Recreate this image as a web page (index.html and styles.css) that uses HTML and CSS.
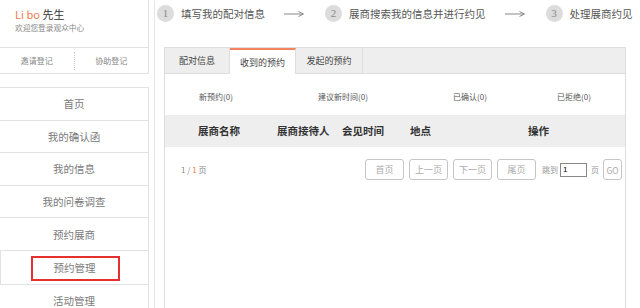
FILE: index.html
```html
<!DOCTYPE html>
<html lang="zh-CN">
<head>
<meta charset="utf-8">
<title>观众中心 - 预约管理</title>
<link rel="stylesheet" href="styles.css">
</head>
<body>
<div class="page">
  <aside class="sidebar">
    <div class="profile">
      <div class="name"><span class="accent">Li bo</span> 先生</div>
      <div class="welcome">欢迎您登录观众中心</div>
    </div>
    <div class="quick">
      <a class="quick-link">邀请登记</a>
      <span class="quick-sep"></span>
      <a class="quick-link">协助登记</a>
    </div>
    <nav class="nav">
      <a class="nav-item">首页</a>
      <a class="nav-item">我的确认函</a>
      <a class="nav-item">我的信息</a>
      <a class="nav-item">我的问卷调查</a>
      <a class="nav-item">预约展商</a>
      <a class="nav-item nav-item-active">预约管理<span class="highlight"></span></a>
      <a class="nav-item">活动管理</a>
    </nav>
  </aside>
  <main class="main">
    <div class="steps">
      <span class="step-num">1</span>
      <span class="step-text">填写我的配对信息</span>
      <svg class="step-arrow" width="20" height="8" viewBox="0 0 20 8"><path d="M0 4H19" stroke="#888" stroke-width="1"/><path d="M14.5 1.5L19.5 4L14.5 6.5" fill="none" stroke="#888" stroke-width="1"/></svg>
      <span class="step-num">2</span>
      <span class="step-text">展商搜索我的信息并进行约见</span>
      <svg class="step-arrow" width="20" height="8" viewBox="0 0 20 8"><path d="M0 4H19" stroke="#888" stroke-width="1"/><path d="M14.5 1.5L19.5 4L14.5 6.5" fill="none" stroke="#888" stroke-width="1"/></svg>
      <span class="step-num">3</span>
      <span class="step-text">处理展商约见</span>
    </div>
    <section class="panel">
      <div class="tabbar">
        <a class="tab tab-1">配对信息</a>
        <a class="tab tab-2 tab-active">收到的预约</a>
        <a class="tab tab-3">发起的预约</a>
      </div>
      <div class="filters">
        <span class="filter f1">新预约(0)</span>
        <span class="filter f2">建议新时间(0)</span>
        <span class="filter f3">已确认(0)</span>
        <span class="filter f4">已拒绝(0)</span>
      </div>
      <div class="thead">
        <span class="th c1">展商名称</span>
        <span class="th c2">展商接待人</span>
        <span class="th c3">会见时间</span>
        <span class="th c4">地点</span>
        <span class="th c5">操作</span>
      </div>
      <div class="pager">
        <span class="page-info">1 / <span class="accent">1</span> 页</span>
        <div class="pager-controls">
          <button class="pg-btn pg-w39">首页</button>
          <button class="pg-btn pg-w39">上一页</button>
          <button class="pg-btn pg-w39">下一页</button>
          <button class="pg-btn pg-w39">尾页</button>
          <span class="pg-label">跳到</span>
          <input class="pg-input" type="text" value="1">
          <span class="pg-label pg-unit">页</span>
          <button class="pg-btn pg-go">GO</button>
        </div>
      </div>
    </section>
  </main>
</div>
</body>
</html>
```
FILE: styles.css
```css
* { box-sizing: border-box; }
html, body { margin: 0; padding: 0; background: #fff; }
body {
  font-family: "Noto Sans CJK SC", "Noto Sans", sans-serif;
  color: #666;
  width: 640px;
  height: 308px;
  overflow: hidden;
}
a { text-decoration: none; color: inherit; }
.accent { color: #f07a4e; }

.page { display: flex; height: 308px; overflow: hidden; }

/* sidebar */
.sidebar { width: 149px; flex: none; height: 308px; overflow: hidden; }
.profile {
  height: 48px;
  border-right: 1px solid #e2e2e2;
  border-bottom: 1px solid #e2e2e2;
  padding: 7px 0 0 15px;
}
.name { font-size: 11px; line-height: 14px; color: #333; }
.welcome { font-size: 7.7px; line-height: 10px; margin-top: 2px; color: #888; }

.quick {
  height: 26px;
  border-right: 1px solid #e2e2e2;
  border-bottom: 1px solid #e2e2e2;
  display: flex;
  align-items: center;
}
.quick-link { flex: 1; text-align: center; font-size: 8px; line-height: 10px; color: #888; }
.quick-sep { width: 0; height: 18px; border-left: 1px dotted #ccc; }

.nav {
  margin-top: 13px;
  border-top: 1px solid #e2e2e2;
  border-right: 1px solid #e2e2e2;
}
.nav-item {
  position: relative;
  display: flex;
  align-items: center;
  justify-content: center;
  height: 32.6px;
  border-bottom: 1px solid #e2e2e2;
  font-size: 10.5px;
  color: #7a7a7a;
}
.nav-item-active { border-left: 1px solid #e2e2e2; height: 34px; }
.highlight {
  position: absolute;
  left: 30px;
  top: 5px;
  width: 89px;
  height: 25px;
  border: 2px solid #e4312f;
}

/* main */
.main {
  flex: 1;
  margin-left: 5px;
  border-left: 1px solid #e6e6e6;
  padding-left: 2px;
}
.steps {
  height: 27px;
  display: flex;
  align-items: center;
}
.step-num {
  width: 17px;
  height: 17px;
  border-radius: 50%;
  background: #dcdcdc;
  color: #8a8a8a;
  font-family: "Liberation Serif", serif;
  font-size: 11px;
  line-height: 17px;
  text-align: center;
  flex: none;
}
.step-text {
  margin-left: 7px;
  font-size: 10.5px;
  line-height: 14px;
  color: #555;
  white-space: nowrap;
}
.step-arrow { margin: 0 21px 0 19px; flex: none; }

.panel {
  margin: 20px 0 0 7px;
  width: 462px;
  height: 261px;
  border: 1px solid #dedede;
  border-bottom: none;
}
.tabbar {
  height: 26px;
  background: #eeeeee;
  border-bottom: 1px solid #dedede;
  display: flex;
}
.tab {
  height: 25px;
  border-right: 1px solid #dedede;
  font-size: 9px;
  line-height: 25px;
  text-align: center;
  color: #444;
}
.tab-1 { width: 65px; }
.tab-2 { width: 66px; }
.tab-3 { width: 67px; }
.tab-active {
  background: #fff;
  border-top: 2px solid #f4845f;
  height: 26px;
  line-height: 26px;
  margin-bottom: -1px;
}

.filters {
  height: 41px;
  padding: 18px 0 0 34px;
  display: flex;
}
.filter { font-size: 8px; line-height: 10px; color: #555; white-space: nowrap; }
.f1 { width: 119px; }
.f2 { width: 135px; }
.f3 { width: 104px; }

.thead {
  height: 32px;
  background: #eeeeee;
  display: flex;
  padding-left: 33px;
}
.th { font-size: 10.5px; line-height: 32px; font-weight: bold; color: #333; white-space: nowrap; }
.c1 { width: 79px; }
.c2 { width: 65px; }
.c3 { width: 68px; }
.c4 { width: 118px; }

.pager {
  display: flex;
  justify-content: space-between;
  align-items: center;
  padding: 12px 3px 0 16px;
}
.page-info { font-size: 8px; color: #888; }
.pager-controls { display: flex; align-items: center; }
.pg-btn {
  height: 21px;
  padding: 0;
  background: #fff;
  border: 1px solid #c6c6c6;
  border-radius: 3px;
  font-family: inherit;
  font-size: 9px;
  color: #aaa;
  margin-left: 5px;
}
.pg-w39 { width: 39px; }
.pg-go { width: 19px; margin-left: 4px; font-size: 8.5px; }
.pg-label { font-size: 8px; color: #999; margin-left: 6px; }
.pg-unit { margin-left: 4px; }
.pg-input {
  width: 27px;
  height: 14px;
  margin-left: 2px;
  padding: 0 2px;
  border: 1px solid #888;
  border-radius: 0;
  font-family: "Liberation Sans", sans-serif;
  font-size: 8px;
  color: #000;
  background: #fff;
}
```
